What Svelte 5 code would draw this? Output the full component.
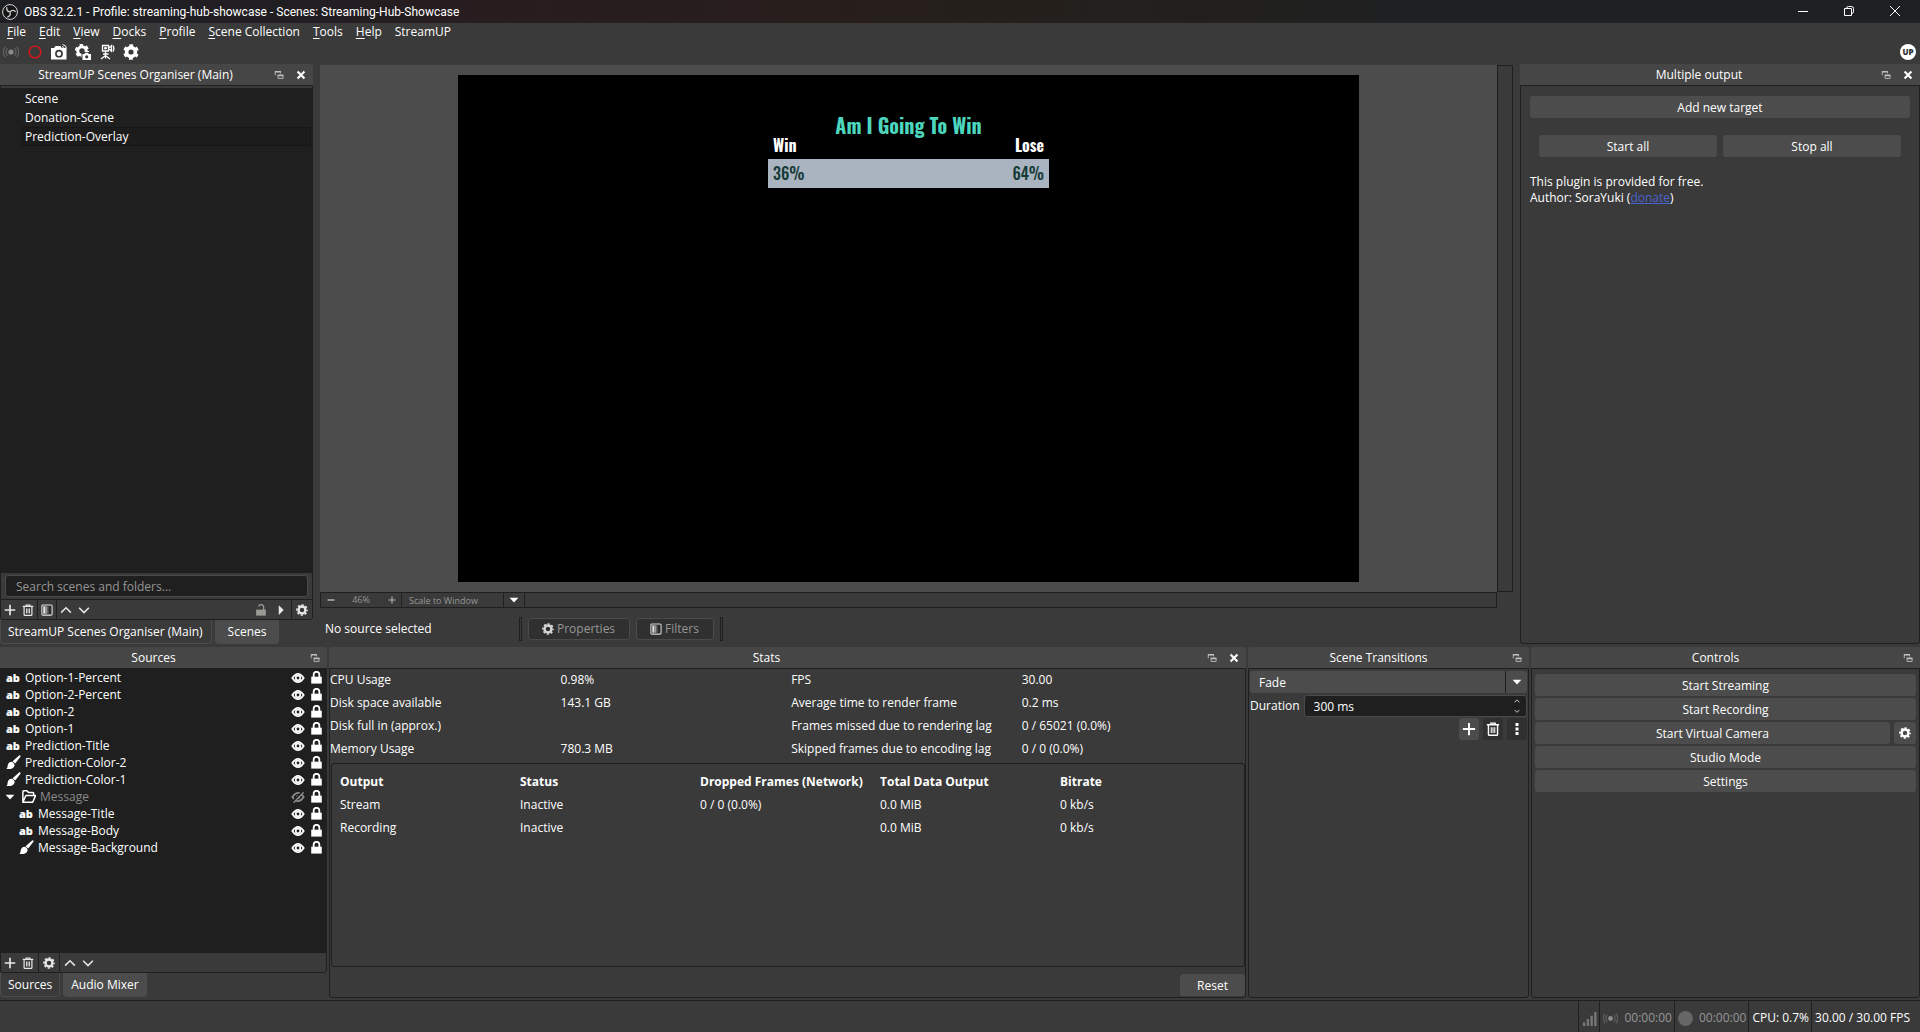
<script lang="ts">
  type Source = { name: string; kind: "text" | "color" | "group"; child?: boolean; hidden?: boolean }

  const menus = ["File", "Edit", "View", "Docks", "Profile", "Scene Collection", "Tools", "Help"]
  const tools = [
    { icon: "broadcast", label: "Start streaming" },
    { icon: "record", label: "Start recording" },
    { icon: "camera", label: "Screenshot" },
    { icon: "gearcam", label: "Capture settings" },
    { icon: "webcam", label: "Virtual camera" },
    { icon: "cog", label: "Settings" },
  ]
  const scenes = ["Scene", "Donation-Scene", "Prediction-Overlay"]
  const sources: Source[] = [
    { name: "Option-1-Percent", kind: "text" },
    { name: "Option-2-Percent", kind: "text" },
    { name: "Option-2", kind: "text" },
    { name: "Option-1", kind: "text" },
    { name: "Prediction-Title", kind: "text" },
    { name: "Prediction-Color-2", kind: "color" },
    { name: "Prediction-Color-1", kind: "color" },
    { name: "Message", kind: "group", hidden: true },
    { name: "Message-Title", kind: "text", child: true },
    { name: "Message-Body", kind: "text", child: true },
    { name: "Message-Background", kind: "color", child: true },
  ]
  const stats = [
    ["CPU Usage", "0.98%", "FPS", "30.00"],
    ["Disk space available", "143.1 GB", "Average time to render frame", "0.2 ms"],
    ["Disk full in (approx.)", "", "Frames missed due to rendering lag", "0 / 65021 (0.0%)"],
    ["Memory Usage", "780.3 MB", "Skipped frames due to encoding lag", "0 / 0 (0.0%)"],
  ]
  const outputHead = ["Output", "Status", "Dropped Frames (Network)", "Total Data Output", "Bitrate"]
  const outputs = [
    ["Stream", "Inactive", "0 / 0 (0.0%)", "0.0 MiB", "0 kb/s"],
    ["Recording", "Inactive", "", "0.0 MiB", "0 kb/s"],
  ]

  let selectedScene = $state("Prediction-Overlay")
  let search = $state("")
  let duration = $state("300 ms")
</script>

{#snippet icon(name: string)}
  <svg class="icon icon--{name}" viewBox="0 0 16 16" aria-hidden="true">
    {#if name === "obs"}
      <circle cx="8" cy="8" r="7.4" fill="#151515" stroke="#d8d8d8" stroke-width="1" />
      <g fill="none" stroke="#d8d8d8" stroke-width="1.3">
        <path d="M5 3.2c-.8 2.4.3 4.3 2.9 4.7" />
        <path d="M5 3.2c-.8 2.4.3 4.3 2.9 4.7" transform="rotate(120 8 8)" />
        <path d="M5 3.2c-.8 2.4.3 4.3 2.9 4.7" transform="rotate(240 8 8)" />
      </g>
    {:else if name === "broadcast"}
      <circle cx="8" cy="8" r="2.6" fill="#8c8c8c" />
      <g fill="none" stroke="#5f5f5f" stroke-width="1.3">
        <path d="M4.600 4.300a5.200 5.200 0 0 0 0 7.400M11.400 4.300a5.200 5.200 0 0 1 0 7.400" />
        <path d="M2.300 2.800a8 8 0 0 0 0 10.400M13.700 2.800a8 8 0 0 1 0 10.400" />
      </g>
    {:else if name === "record"}
      <circle cx="8" cy="8" r="5.8" fill="none" stroke="#c8191f" stroke-width="1.6" />
    {:else if name === "camera"}
      <path fill="currentColor" fill-rule="evenodd" d="M0 4h3L4.500 2h5L10.800 4H15.500V15.500H0zM8 5.800a3.900 3.900 0 1 0 0 7.800A3.900 3.900 0 0 0 8 5.800z" />
      <circle cx="8" cy="9.700" r="2.200" fill="currentColor" />
      <path d="M11 2.600q2 .2 2.400 2.200M11.600.6q3.400.2 3.900 3.800" fill="none" stroke="currentColor" />
    {:else if name === "gearcam"}
      <circle cx="7" cy="7" r="4.2" fill="none" stroke="currentColor" stroke-width="3" />
      <circle cx="7" cy="7" r="6" fill="none" stroke="currentColor" stroke-width="2.2" stroke-dasharray="3.3 2.983" />
      <path d="M6.500 8h9.500v8H6.500z" fill="#3a3a3a" />
      <path d="M7.500 10h2l.6-1.200h3l.6 1.200H16v6H7.500z" fill="currentColor" />
      <circle cx="11.7" cy="12.8" r="1.6" fill="#3a3a3a" />
    {:else if name === "webcam"}
      <g fill="none" stroke="currentColor" stroke-width="1.3">
        <path d="M3.500 1.500h6v5.500h-6zM9.500 4.200l3-2.500v5.500l-3-3M6.500 7v7.500M2 15l4.500-3.500L11 15M4 10h5.500" />
        <path d="M14 1.500q1.800 3 0 6" />
      </g>
      <circle cx="6.5" cy="4.2" r="1.4" fill="currentColor" />
    {:else if name === "cog"}
      <circle cx="8" cy="8" r="4.4" fill="none" stroke="currentColor" stroke-width="3.6" />
      <circle cx="8" cy="8" r="6.7" fill="none" stroke="currentColor" stroke-width="2.2" stroke-dasharray="3.7 3.316" stroke-dashoffset="1.85" transform="rotate(30 8 8)" />
    {:else if name === "gear"}
      <circle cx="8" cy="8" r="4.6" fill="none" stroke="currentColor" stroke-width="3.2" />
      <circle cx="8" cy="8" r="6.8" fill="none" stroke="currentColor" stroke-width="2" stroke-dasharray="2.9 2.44" stroke-dashoffset="1.45" />
    {:else if name === "float"}
      <path d="M2 8.500V2.500h8.500v3" fill="none" stroke="#b0b0b0" stroke-width="1.6" />
      <path d="M1.500 1.500h9.500v2.500H1.500zM6 7h9v3H6z" fill="#c0c0c0" />
      <path d="M6.500 8v5.500h8V8" fill="none" stroke="#b0b0b0" stroke-width="1.6" />
    {:else if name === "close"}
      <path d="M2.500 2.500l11 11M13.500 2.500l-11 11" stroke="currentColor" stroke-width="3.4" />
    {:else if name === "plus"}
      <path d="M8 1v14M1 8h14" stroke="currentColor" stroke-width="2.2" />
    {:else if name === "minus"}
      <path d="M1 8h14" stroke="currentColor" stroke-width="3" />
    {:else if name === "trash"}
      <g fill="none" stroke="currentColor" stroke-width="1.6">
        <path d="M1 3.200h14M5.500 3V1.300h5V3M2.800 3.500v10.700q0 1 1 1h8.400q1 0 1-1V3.500" />
        <path d="M6 6v6.500M8 6v6.500M10 6v6.500" stroke-width="1.2" />
      </g>
    {:else if name === "filter"}
      <rect x="1.2" y="1.2" width="13.6" height="13.6" rx="1.5" fill="#2c2c2c" stroke="currentColor" stroke-width="1.4" />
      <path d="M3 3h3v10H3z" fill="currentColor" />
      <path d="M6 3h2v10H6z" fill="#999" />
      <path d="M8 3h2v10H8z" fill="#666" />
    {:else if name === "up"}
      <path d="M1.500 11.500L8 5l6.500 6.500" fill="none" stroke="currentColor" stroke-width="2" />
    {:else if name === "down"}
      <path d="M1.500 5L8 11.500 14.500 5" fill="none" stroke="currentColor" stroke-width="2" />
    {:else if name === "unlock"}
      <path d="M1.500 7.500h13v8h-13z" fill="#9a9a94" />
      <path d="M11.500 8V3.800a3.300 3.300 0 0 0-6.500-.5" fill="none" stroke="#9a9a94" stroke-width="1.8" />
    {:else if name === "lock"}
      <path d="M1.500 7h13v8.500h-13z" fill="currentColor" />
      <path d="M4.500 7.500V4.500a3.500 3.500 0 0 1 7 0v3" fill="none" stroke="currentColor" stroke-width="2.2" />
    {:else if name === "right"}
      <path d="M5 1.500l6.500 6.500L5 14.500z" fill="currentColor" />
    {:else if name === "caret"}
      <path d="M1 4.500h14L8 12z" fill="currentColor" />
    {:else if name === "eye"}
      <path d="M1.600 8Q8-1.500 14.400 8 8 17.500 1.600 8z" fill="none" stroke="currentColor" stroke-width="2.2" />
      <circle cx="8" cy="8" r="2.6" fill="none" stroke="currentColor" stroke-width="2" />
    {:else if name === "eye-off"}
      <path d="M1.600 8Q8-1.500 14.400 8 8 17.500 1.600 8z" fill="none" stroke="currentColor" stroke-width="2.2" />
      <circle cx="8" cy="8" r="2.4" fill="currentColor" />
      <path d="M1.500 13.500l12-12" stroke="#1f1f1f" stroke-width="2" />
      <path d="M3 14.500l11.500-12" stroke="currentColor" stroke-width="1.5" />
    {:else if name === "brush"}
      <path d="M14.300.3q1.300 0 1.300 1.300L9.800 9 7 6.600z" fill="currentColor" />
      <path d="M6 7.200q3.200 1 3.200 4-.8 4.300-8.700 3.800Q1.700 13.800 1.700 11.500 2.500 7.300 6 7.200z" fill="currentColor" />
    {:else if name === "folder"}
      <path d="M2 14.200V3q0-1.200 1-1.200h3.200L8 3.600h4.500q1 0 1 1V7M2 14.200h10.500l3-7.200H5.200z" fill="none" stroke="currentColor" stroke-width="1.6" stroke-linejoin="round" />
    {:else if name === "dots"}
      <path d="M6.300 1.200h3.400v3.400H6.300zM6.300 6.300h3.400v3.400H6.300zM6.300 11.400h3.400v3.400H6.300z" fill="currentColor" />
    {:else if name === "bars"}
      <path d="M1 12h2.500v4H1zM5 8.500h2.500V16H5zM9 5h2.500v11H9zM13 1h2.500v15H13z" fill="#777" />
    {:else if name === "dot"}
      <circle cx="8" cy="8" r="8" fill="#666" />
    {/if}
  </svg>
{/snippet}

{#snippet dockHead(title: string, closable: boolean)}
  <header class="dock__head">
    <h2 class="dock__title">{title}</h2>
    <button class="dock__btn" type="button" aria-label="Float {title}">{@render icon("float")}</button>
    {#if closable}
      <button class="dock__btn" type="button" aria-label="Close {title}">{@render icon("close")}</button>
    {/if}
  </header>
{/snippet}

{#snippet iconButton(name: string, label: string)}
  <button class="icon-btn" type="button" aria-label={label}>{@render icon(name)}</button>
{/snippet}

<div class="obs">
  <header class="titlebar">
    {@render icon("obs")}
    <h1 class="titlebar__text">OBS 32.2.1 - Profile: streaming-hub-showcase - Scenes: Streaming-Hub-Showcase</h1>
    <button class="titlebar__btn" type="button" aria-label="Minimize">
      <svg viewBox="0 0 10 10"><path d="M0 5.500h10" /></svg>
    </button>
    <button class="titlebar__btn" type="button" aria-label="Restore">
      <svg viewBox="0 0 10 10"><path d="M.5 2.500h7v7h-7zM2.500 2.500q0-2 2-2h3q2 0 2 2v3q0 2-2 2" /></svg>
    </button>
    <button class="titlebar__btn" type="button" aria-label="Close">
      <svg viewBox="0 0 10 10"><path d="M0 0l10 10M10 0L0 10" /></svg>
    </button>
  </header>

  <nav class="menubar" aria-label="Main menu">
    {#each menus as menu (menu)}
      <button type="button"><u>{menu[0]}</u>{menu.slice(1)}</button>
    {/each}
    <button type="button">StreamUP</button>
  </nav>

  <div class="toolbar">
    {#each tools as tool (tool.icon)}
      {@render iconButton(tool.icon, tool.label)}
    {/each}
    <button class="toolbar__up" type="button" aria-label="StreamUP">UP</button>
  </div>

  <div class="upper">
    <section class="dock dock--scenes">
      {@render dockHead("StreamUP Scenes Organiser (Main)", true)}
      <div class="panel">
        <ul class="scenes">
          {#each scenes as scene (scene)}
            <li>
              <button
                class="scenes__item"
                class:scenes__item--selected={scene === selectedScene}
                type="button"
                onclick={() => (selectedScene = scene)}
              >
                {scene}
              </button>
            </li>
          {/each}
        </ul>
        <div class="search">
          <input type="search" aria-label="Search scenes" placeholder="Search scenes and folders..." bind:value={search} />
        </div>
        <div class="strip">
          {@render iconButton("plus", "Add scene")}
          {@render iconButton("trash", "Remove scene")}
          <span class="strip__sep"></span>
          {@render iconButton("filter", "Scene filters")}
          <span class="strip__sep"></span>
          {@render iconButton("up", "Move up")}
          {@render iconButton("down", "Move down")}
          <div class="strip__end">
            {@render iconButton("unlock", "Lock")}
            {@render iconButton("right", "Expand")}
            <span class="strip__sep"></span>
            {@render iconButton("gear", "Organiser settings")}
          </div>
        </div>
      </div>
      <div class="tabs">
        <button class="tab tab--active" type="button">StreamUP Scenes Organiser (Main)</button>
        <button class="tab" type="button">Scenes</button>
      </div>
    </section>

    <main class="center">
      <div class="preview">
        <div class="preview__view">
          <div class="canvas">
            <div class="poll">
              <div class="poll__title">Am I Going To Win</div>
              <div class="poll__labels"><span>Win</span><span>Lose</span></div>
              <div class="poll__bar"><span>36%</span><span>64%</span></div>
            </div>
          </div>
        </div>
        <div class="preview__vscroll"></div>
      </div>
      <div class="zoombar">
        <button class="zoombar__btn" type="button" aria-label="Zoom out">{@render icon("minus")}</button>
        <span class="zoombar__value">46%</span>
        <button class="zoombar__btn" type="button" aria-label="Zoom in">{@render icon("plus")}</button>
        <label class="select select--zoom">
          <select aria-label="Preview scale"><option>Scale to Window</option></select>
          {@render icon("caret")}
        </label>
      </div>
      <div class="context">
        <span class="context__name">No source selected</span>
        <span class="handle"></span>
        <button class="context__btn" type="button">{@render icon("gear")}Properties</button>
        <button class="context__btn" type="button">{@render icon("filter")}Filters</button>
        <span class="handle"></span>
      </div>
    </main>

    <section class="dock dock--multi">
      {@render dockHead("Multiple output", true)}
      <div class="panel multi">
        <button class="btn" type="button">Add new target</button>
        <div class="multi__pair">
          <button class="btn" type="button">Start all</button>
          <button class="btn" type="button">Stop all</button>
        </div>
        <p class="multi__note">This plugin is provided for free.<br />Author: SoraYuki (<a href="#donate">donate</a>)</p>
      </div>
    </section>
  </div>

  <div class="lower">
    <section class="dock dock--sources">
      {@render dockHead("Sources", false)}
      <div class="panel">
        <ul class="sources">
          {#each sources as source (source.name)}
            <li class="source" class:source--child={source.child} class:source--hidden={source.hidden}>
              {#if source.kind === "group"}
                <span class="source__caret">{@render icon("caret")}</span>
                <span class="source__kind">{@render icon("folder")}</span>
              {:else if source.kind === "color"}
                <span class="source__kind">{@render icon("brush")}</span>
              {:else}
                <span class="source__kind source__kind--text">ab</span>
              {/if}
              <span class="source__name">{source.name}</span>
              <button class="source__btn source__btn--eye" type="button" aria-label="Toggle {source.name}">
                {@render icon(source.hidden ? "eye-off" : "eye")}
              </button>
              <button class="source__btn" type="button" aria-label="Unlock {source.name}">{@render icon("lock")}</button>
            </li>
          {/each}
        </ul>
        <div class="strip">
          {@render iconButton("plus", "Add source")}
          {@render iconButton("trash", "Remove source")}
          <span class="strip__sep"></span>
          {@render iconButton("gear", "Source properties")}
          <span class="strip__sep"></span>
          {@render iconButton("up", "Move up")}
          {@render iconButton("down", "Move down")}
        </div>
      </div>
      <div class="tabs">
        <button class="tab tab--active" type="button">Sources</button>
        <button class="tab" type="button">Audio Mixer</button>
      </div>
    </section>

    <section class="dock dock--stats">
      {@render dockHead("Stats", true)}
      <div class="panel">
        <table class="stats">
          <tbody>
            {#each stats as row (row[0])}
              <tr>{#each row as cell}<td>{cell}</td>{/each}</tr>
            {/each}
          </tbody>
        </table>
        <div class="outputs">
          <table>
            <thead>
              <tr>{#each outputHead as head (head)}<th>{head}</th>{/each}</tr>
            </thead>
            <tbody>
              {#each outputs as row (row[0])}
                <tr>{#each row as cell}<td>{cell}</td>{/each}</tr>
              {/each}
            </tbody>
          </table>
        </div>
        <button class="btn stats__reset" type="button">Reset</button>
      </div>
    </section>

    <section class="dock dock--transitions">
      {@render dockHead("Scene Transitions", false)}
      <div class="panel transitions">
        <label class="select select--fade">
          <select aria-label="Transition"><option>Fade</option></select>
          {@render icon("caret")}
        </label>
        <div class="transitions__row">
          <label for="duration">Duration</label>
          <div class="spin">
            <input id="duration" type="text" bind:value={duration} />
            <div class="spin__arrows">
              <button type="button" aria-label="Increase">{@render icon("up")}</button>
              <button type="button" aria-label="Decrease">{@render icon("down")}</button>
            </div>
          </div>
        </div>
        <div class="transitions__actions">
          <button class="btn" type="button" aria-label="Add transition">{@render icon("plus")}</button>
          <button class="btn btn--dark" type="button" aria-label="Remove transition">{@render icon("trash")}</button>
          <button class="btn btn--dark" type="button" aria-label="Transition menu">{@render icon("dots")}</button>
        </div>
      </div>
    </section>

    <section class="dock dock--controls">
      {@render dockHead("Controls", false)}
      <div class="panel controls">
        <button class="btn" type="button">Start Streaming</button>
        <button class="btn" type="button">Start Recording</button>
        <div class="controls__row">
          <button class="btn" type="button">Start Virtual Camera</button>
          <button class="btn controls__gear" type="button" aria-label="Virtual camera settings">{@render icon("gear")}</button>
        </div>
        <button class="btn" type="button">Studio Mode</button>
        <button class="btn" type="button">Settings</button>
      </div>
    </section>
  </div>

  <footer class="status">
    <span class="status__cell">{@render icon("bars")}</span>
    <span class="status__cell status__cell--dim">{@render icon("broadcast")}00:00:00</span>
    <span class="status__cell status__cell--dim">{@render icon("dot")}00:00:00</span>
    <span class="status__cell">CPU: 0.7%</span>
    <span class="status__cell">30.00 / 30.00 FPS</span>
  </footer>
</div>

<style>
  :global(body) {
    margin: 0;
    background: #3a3a3a;
  }

  .obs {
    --bg: #3a3a3a;
    --head: #464646;
    --raised: #4c4c4c;
    --dark: #1f1f1f;
    --dim: #969696;
    display: flex;
    flex-direction: column;
    height: 100vh;
    overflow: hidden;
    background: var(--bg);
    color: #fff;
    font: 12px/16px "Open Sans", "Noto Sans", sans-serif;
  }

  .obs * {
    box-sizing: border-box;
  }

  button,
  input,
  select {
    margin: 0;
    padding: 0;
    border: 0;
    background: none;
    color: inherit;
    font: inherit;
  }

  h1,
  h2,
  p,
  ul {
    margin: 0;
    padding: 0;
    font: inherit;
    list-style: none;
  }

  .icon {
    display: block;
    flex: none;
    width: 12px;
    height: 12px;
  }

  .titlebar {
    display: flex;
    align-items: center;
    flex: none;
    height: 23px;
    padding: 0 2px;
    background: linear-gradient(90deg, #1f2024 0, #211e22 15%, #281c1f 25%, #281e1c 42%, #251f1b 50%, #21201e 65%, #1f2021 72%, #1f2024 78%);
  }

  .icon--obs {
    width: 16px;
    height: 16px;
  }

  .titlebar__text {
    flex: 1;
    padding-left: 6px;
    font-family: Roboto, "Open Sans", sans-serif;
  }

  .titlebar__btn {
    display: flex;
    align-items: center;
    justify-content: center;
    width: 46px;
    height: 21px;
    padding-bottom: 2px;
  }

  .titlebar__btn svg {
    width: 10px;
    height: 10px;
    fill: none;
    stroke: #fff;
    overflow: visible;
  }

  .menubar {
    display: flex;
    flex: none;
    gap: 13px;
    height: 18px;
    padding: 1px 7px;
  }

  .menubar u {
    text-underline-offset: 2px;
  }

  .toolbar {
    display: flex;
    align-items: center;
    flex: none;
    gap: 8px;
    height: 23px;
    padding: 0 4px 2px 3px;
  }

  .toolbar .icon {
    width: 16px;
    height: 16px;
  }

  .toolbar__up {
    width: 16px;
    height: 16px;
    margin-left: auto;
    border-radius: 50%;
    background: #fff;
    color: #333;
    font: 800 8px/16px "Open Sans", sans-serif;
  }

  .upper {
    display: flex;
    flex: 1;
    gap: 7px;
    min-height: 0;
  }

  .lower {
    display: flex;
    flex: none;
    gap: 2px;
    height: 351px;
    margin-top: 2px;
  }

  .dock {
    display: flex;
    flex-direction: column;
    min-height: 0;
  }

  .dock--scenes {
    width: 313px;
  }

  .dock--multi {
    width: 400px;
  }

  .dock--sources {
    width: 327px;
  }

  .dock--stats {
    flex: 1;
  }

  .dock--transitions {
    width: 281px;
  }

  .dock--controls {
    width: 389px;
  }

  .dock__head {
    display: flex;
    align-items: center;
    flex: none;
    gap: 4px;
    height: 21px;
    padding: 0 3px 0 5px;
    border-radius: 2px 2px 0 0;
    background: var(--head);
  }

  .dock__title {
    flex: 1;
    text-align: center;
  }

  .dock__btn {
    display: flex;
    justify-content: center;
    width: 18px;
  }

  .dock__btn .icon {
    width: 10px;
    height: 10px;
  }

  .panel {
    display: flex;
    flex: 1;
    flex-direction: column;
    min-height: 0;
    border: 1px solid var(--dark);
    border-radius: 0 0 3px 3px;
  }

  .scenes {
    flex: 1;
    margin-top: 2px;
    padding: 1px 1px 0 21px;
    background: var(--dark);
  }

  .scenes__item {
    display: block;
    width: 100%;
    height: 19px;
    padding: 0 2px;
    border: 1px solid transparent;
    text-align: left;
  }

  .scenes__item--selected {
    border-color: #161616;
    background: #1c1c1c;
  }

  .search {
    padding: 2px 4px;
    border-bottom: 1px solid var(--dark);
  }

  .search input {
    display: block;
    width: 100%;
    height: 22px;
    padding: 1px 10px 0;
    border: 1px solid #4a4a4a;
    border-radius: 3px;
    background: var(--dark);
  }

  .search input::placeholder {
    color: var(--dim);
    opacity: 1;
  }

  .strip {
    display: flex;
    align-items: center;
    flex: none;
    height: 19px;
  }

  .strip .icon-btn {
    display: flex;
    justify-content: center;
    width: 18px;
    color: #e8e8e8;
  }

  .strip__sep {
    width: 1px;
    height: 100%;
    background: var(--dark);
  }

  .dock--sources .strip__sep {
    margin: 0 1px;
  }

  .strip__end {
    display: flex;
    align-items: center;
    height: 100%;
    margin-left: auto;
  }

  .strip__end .icon-btn {
    width: 20px;
  }

  .tabs {
    display: flex;
    flex: none;
    gap: 3px;
    height: 25px;
  }

  .tab {
    height: 24px;
    padding: 0 12px;
    border: 1px solid var(--raised);
    border-top: 0;
    border-radius: 0 0 4px 4px;
    background: var(--raised);
  }

  .tab--active {
    padding: 0 8px 0 7px;
    background: var(--bg);
  }

  .dock--sources .tab {
    padding: 0 7px;
  }

  .center {
    display: flex;
    flex: 1;
    flex-direction: column;
    min-width: 0;
  }

  .preview {
    display: flex;
    flex: 1;
    min-height: 0;
    margin-top: 1px;
  }

  .preview__view {
    display: flex;
    flex: 1;
    justify-content: center;
    padding: 10px 0;
    background: var(--raised);
  }

  .preview__vscroll {
    width: 16px;
    border: 1px solid var(--dark);
  }

  .canvas {
    display: flex;
    justify-content: center;
    height: 100%;
    aspect-ratio: 16 / 9;
    background: #000;
  }

  .poll {
    width: 281px;
    padding-top: 38px;
    font: 700 16px/16px Oswald, "Liberation Sans Narrow", sans-serif;
  }

  .poll__title {
    color: #4cd6bd;
    font-size: 20px;
    line-height: 24px;
    text-align: center;
  }

  .poll__labels,
  .poll__bar {
    display: flex;
    justify-content: space-between;
    padding: 0 5px;
  }

  .poll__bar {
    margin-top: 6px;
    background: #a9b4c0;
    color: #163a38;
    font-weight: 500;
    line-height: 29px;
  }

  .zoombar {
    display: flex;
    align-items: center;
    height: 16px;
    margin-right: 16px;
    border: 1px solid var(--dark);
    color: var(--dim);
    font-size: 9px;
  }

  .zoombar__btn {
    display: flex;
    justify-content: center;
    width: 19px;
    color: #b4b4b4;
  }

  .zoombar__btn .icon {
    width: 8px;
    height: 8px;
  }

  .zoombar__value {
    width: 42px;
    text-align: center;
  }

  .select {
    display: flex;
    align-items: center;
  }

  .select select {
    flex: 1;
    height: 100%;
    appearance: none;
  }

  .select .icon--caret {
    width: 10px;
    height: 10px;
    color: #fff;
  }

  .select--zoom {
    width: 124px;
    height: 14px;
    padding-right: 5px;
    border: solid var(--dark);
    border-width: 0 1px;
  }

  .select--zoom select {
    margin-right: 5px;
    padding-left: 7px;
    border-right: 1px solid var(--dark);
  }

  .context {
    display: flex;
    align-items: center;
    gap: 6px;
    height: 37px;
    padding: 5px 0 0 5px;
  }

  .context__name {
    width: 188px;
  }

  .handle {
    width: 3px;
    height: 24px;
    border: 1px solid var(--dark);
  }

  .context__btn {
    display: flex;
    align-items: center;
    gap: 3px;
    height: 22px;
    padding: 0 14px 0 13px;
    border: 1px solid #4a4a4a;
    border-radius: 3px;
    background: #303030;
    color: var(--dim);
  }

  .context__btn .icon {
    color: #d8d8d8;
  }

  .btn {
    display: flex;
    align-items: center;
    justify-content: center;
    height: 22px;
    padding-top: 1px;
    border-radius: 3px;
    background: var(--raised);
  }

  .btn--dark {
    background: #303030;
  }

  .multi {
    padding: 10px 9px;
    margin-bottom: 1px;
  }

  .multi__pair {
    display: flex;
    gap: 6px;
    padding: 17px 9px;
  }

  .multi__pair .btn {
    flex: 1;
  }

  .multi a {
    color: #4a64d0;
  }

  .sources {
    flex: 1;
    background: var(--dark);
  }

  .source {
    display: flex;
    align-items: center;
    height: 17px;
    padding: 0 1px 0 5px;
  }

  .source--child {
    padding-left: 18px;
  }

  .source__kind {
    width: 19px;
  }

  .source__kind .icon {
    width: 15px;
    height: 15px;
  }

  .source__kind--text {
    font: 800 11px/16px "Open Sans", sans-serif;
  }

  .source--hidden {
    padding-left: 4px;
  }

  .source__caret {
    width: 16px;
  }

  .source__caret .icon {
    width: 10px;
    height: 10px;
  }

  .source__name {
    flex: 1;
  }

  .source--hidden .source__name,
  .source--hidden .source__btn--eye {
    color: #8a8a8a;
  }

  .source__btn {
    display: flex;
    justify-content: center;
    width: 18px;
  }

  .source__btn .icon {
    width: 13px;
    height: 13px;
  }

  .source__btn--eye .icon {
    width: 14px;
    height: 14px;
  }

  table {
    width: 100%;
    border-collapse: collapse;
    table-layout: fixed;
  }

  th,
  td {
    height: 23px;
    padding: 0 0 2px;
    text-align: left;
  }

  .stats td:not(:last-child) {
    width: 25.2%;
  }

  .outputs {
    flex: 1;
    margin: 2px 0 0 1px;
    padding: 7px 4px 0 8px;
    border: 1px solid var(--dark);
    border-radius: 3px;
  }

  .stats__reset {
    width: 65px;
    margin: 7px 0 1px auto;
  }

  .transitions {
    gap: 2px;
    padding: 2px 1px;
  }

  .select--fade {
    height: 22px;
    padding-right: 5px;
    border-radius: 3px;
    background: var(--raised);
  }

  .select--fade select {
    margin-right: 6px;
    padding: 1px 0 0 9px;
    border-right: 1px solid var(--dark);
  }

  .transitions__row {
    display: flex;
    align-items: center;
    gap: 4px;
  }

  .spin {
    display: flex;
    flex: 1;
    height: 22px;
    padding: 0 6px 0 9px;
    border: 1px solid #4a4a4a;
    border-radius: 3px;
    background: var(--dark);
  }

  .spin input {
    flex: 1;
    min-width: 0;
    padding-top: 1px;
  }

  .spin__arrows {
    display: flex;
    flex-direction: column;
    justify-content: space-around;
  }

  .spin .icon {
    width: 6px;
    height: 6px;
  }

  .transitions__actions {
    display: flex;
    gap: 4px;
    justify-content: flex-end;
    margin-top: -1px;
  }

  .transitions__actions .btn {
    width: 20px;
    padding: 0;
  }

  .transitions__actions .icon {
    width: 14px;
    height: 14px;
  }

  .controls {
    gap: 2px;
    padding: 5px 3px;
  }

  .controls__row {
    display: flex;
    gap: 4px;
  }

  .controls__row .btn {
    flex: 1;
  }

  .controls__row .controls__gear {
    flex: none;
    width: 22px;
    padding: 0;
  }

  .status {
    display: flex;
    flex: none;
    justify-content: flex-end;
    height: 32px;
    margin-top: 2px;
    padding-right: 8px;
    border-top: 1px solid var(--dark);
  }

  .status__cell {
    display: flex;
    align-items: center;
    gap: 6px;
    padding: 3px 2px 0 3px;
    border-left: 1px solid var(--dark);
  }

  .status__cell--dim {
    color: var(--dim);
  }

  .status .icon {
    width: 15px;
    height: 15px;
  }
</style>
